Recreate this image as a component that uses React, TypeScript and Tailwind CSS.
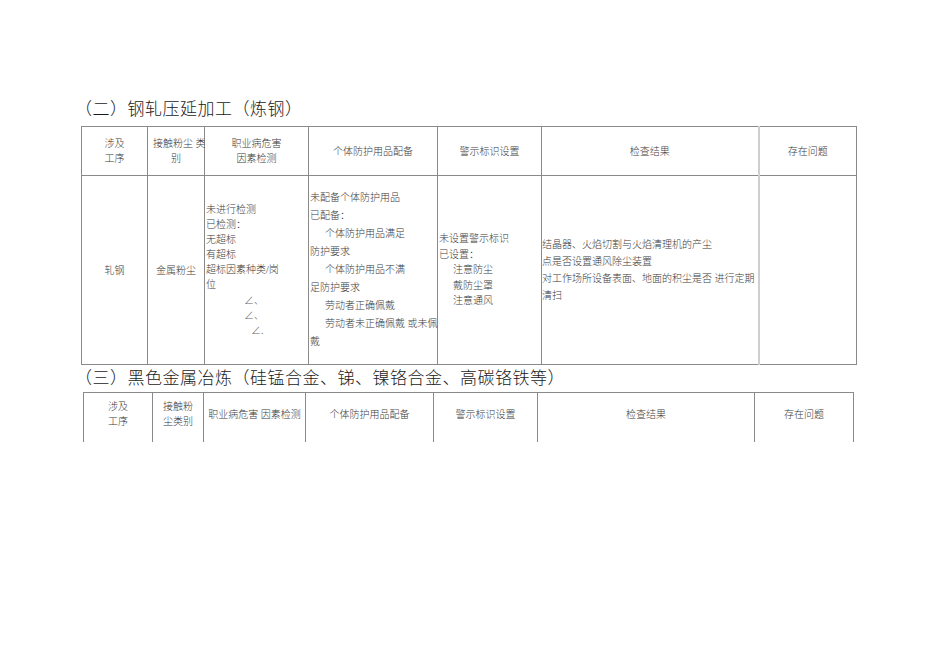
import React from 'react';

const FONT = { fontFamily: '"Liberation Serif", "Noto Sans CJK SC", serif' };

const cols1 = [66, 57, 104, 129, 104, 217, 98];
const cols2 = [69, 51, 102, 128, 104, 217, 99];

const Title = ({ children }: { children: React.ReactNode }) => (
  <h2 className="text-[17px] leading-[24px] font-light text-[#1a1a1a] tracking-[0.5px]">{children}</h2>
);

const App = () => {
  const th = 'border border-[#8a8a8a] text-center align-middle font-light text-[10px] leading-[15px] text-[#3a3a3a] px-1';
  const td = 'border border-[#8a8a8a] align-middle font-light text-[10px] text-[#3a3a3a]';

  return (
    <div className="w-[950px] h-[672px] bg-white overflow-hidden" style={FONT}>
      <div className="pt-[98px] pl-[75px]">
        <Title>（二）钢轧压延加工（炼钢）</Title>

        <table className="mt-[4px] ml-[6px] border-collapse table-fixed" style={{ width: 775 }}>
          <colgroup>
            {cols1.map((w, i) => (
              <col key={i} style={{ width: w }} />
            ))}
          </colgroup>
          <thead>
            <tr className="h-[49px]">
              <th className={th}>
                涉及
                <br />
                工序
              </th>
              <th className={`${th} px-0`}>
                <span className="block text-left pl-px whitespace-nowrap">接触粉尘 类</span>
                <span className="block">别</span>
              </th>
              <th className={th}>
                职业病危害
                <br />
                因素检测
              </th>
              <th className={th}>个体防护用品配备</th>
              <th className={th}>警示标识设置</th>
              <th className={th}>检查结果</th>
              <th className={`${th} border-l-2 border-l-[#cfcfcf]`}>存在问题</th>
            </tr>
          </thead>
          <tbody>
            <tr className="h-[189px]">
              <td className={`${td} text-center`}>轧钢</td>
              <td className={`${td} text-center`}>金属粉尘</td>
              <td className={`${td} leading-[15px] pl-px`}>
                <div>未进行检测</div>
                <div>已检测：</div>
                <div>无超标</div>
                <div>有超标</div>
                <div>超标因素种类/岗</div>
                <div>位</div>
                <div className="pl-[38px] mt-px text-[#666]">∠、</div>
                <div className="pl-[38px] text-[#666]">∠、</div>
                <div className="pl-[45px] text-[#666]">∠.</div>
              </td>
              <td className={`${td} leading-[18px] pl-px`}>
                <div>未配备个体防护用品</div>
                <div>已配备：</div>
                <div className="pl-[15px]">个体防护用品满足</div>
                <div>防护要求</div>
                <div className="pl-[15px]">个体防护用品不满</div>
                <div>足防护要求</div>
                <div className="pl-[15px]">劳动者正确佩戴</div>
                <div className="pl-[15px] whitespace-nowrap">劳动者未正确佩戴 或未佩</div>
                <div>戴</div>
              </td>
              <td className={`${td} leading-[15.5px] pl-px`}>
                <div>未设置警示标识</div>
                <div>已设置：</div>
                <div className="pl-[14px]">注意防尘</div>
                <div className="pl-[14px]">戴防尘罩</div>
                <div className="pl-[14px]">注意通风</div>
              </td>
              <td className={`${td} leading-[17px]`}>
                <div>结晶器、火焰切割与火焰清理机的产尘</div>
                <div>点是否设置通风除尘装置</div>
                <div className="whitespace-nowrap">对工作场所设备表面、地面的积尘是否 进行定期</div>
                <div>清扫</div>
              </td>
              <td className={`${td} border-l-2 border-l-[#cfcfcf]`} />
            </tr>
          </tbody>
        </table>

        <div className="mt-[2px]">
          <Title>（三）黑色金属冶炼（硅锰合金、锑、镍铬合金、高碳铬铁等）</Title>
        </div>

        <table className="mt-[1px] ml-[8px] border-collapse table-fixed" style={{ width: 770 }}>
          <colgroup>
            {cols2.map((w, i) => (
              <col key={i} style={{ width: w }} />
            ))}
          </colgroup>
          <thead>
            <tr className="h-[49px]">
              <th className={`${th} border-b-0 pb-[6px]`}>
                涉及
                <br />
                工序
              </th>
              <th className={`${th} border-b-0 pb-[6px]`}>
                接触粉
                <br />
                尘类别
              </th>
              <th className={`${th} border-b-0 pb-[6px] whitespace-nowrap px-0`}>职业病危害 因素检测</th>
              <th className={`${th} border-b-0 pb-[6px]`}>个体防护用品配备</th>
              <th className={`${th} border-b-0 pb-[6px]`}>警示标识设置</th>
              <th className={`${th} border-b-0 pb-[6px]`}>检查结果</th>
              <th className={`${th} border-b-0 pb-[6px]`}>存在问题</th>
            </tr>
          </thead>
        </table>
      </div>
    </div>
  );
};

export default App;
